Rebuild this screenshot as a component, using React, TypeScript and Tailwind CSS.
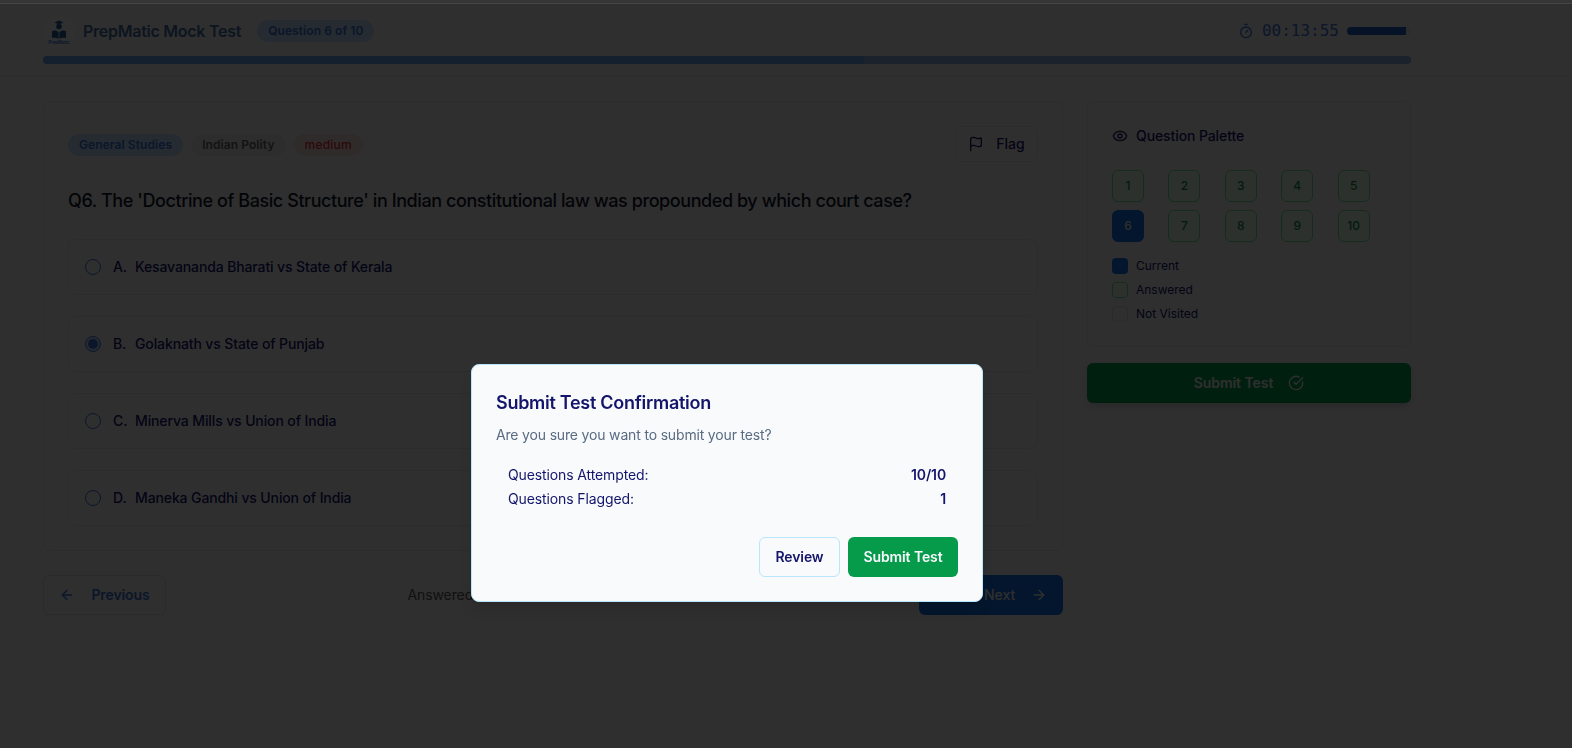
import React from 'react'
import { ArrowLeft, ArrowRight, CircleCheckBig, Eye, Flag, Timer } from 'lucide-react'

const options = [
    { key: 'A', text: 'Kesavananda Bharati vs State of Kerala' },
    { key: 'B', text: 'Golaknath vs State of Punjab' },
    { key: 'C', text: 'Minerva Mills vs Union of India' },
    { key: 'D', text: 'Maneka Gandhi vs Union of India' },
]

const Logo = () => (
    <div className="w-8 h-8 rounded-full bg-[#f0f1f3] flex items-center justify-center">
        <svg viewBox="0 0 32 32" className="w-8 h-8">
            {/* cap */}
            <path d="M11.5 7.5 L16 5.5 L20.5 7.5 L16 9.5 Z" fill="#1f5f9a" />
            {/* head */}
            <circle cx="16" cy="11.5" r="2.8" fill="#1f5f9a" />
            {/* open book */}
            <path d="M9 16 C11.5 15 14 15.5 15.6 17 V24 C14 22.8 11.5 22.4 9 23 Z" fill="#1f5f9a" />
            <path d="M23 16 C20.5 15 18 15.5 16.4 17 V24 C18 22.8 20.5 22.4 23 23 Z" fill="#1f5f9a" />
            <text x="16" y="28.5" textAnchor="middle" fontSize="4.4" fontWeight="600" fill="#2a70d0">PrepMatic</text>
        </svg>
    </div>
)

const App = () => {
    return (
        <div className="relative h-[748px] overflow-hidden bg-[#e8e8e8] font-['Inter',sans-serif]">
            {/* header */}
            <header className="h-[77px] pt-[4px] border-b border-[#dadada] bg-[#ebebeb] px-[43px]">
                <div className="w-[1368px]">
                    <div className="h-[52px] flex items-center justify-between pt-[1px]">
                        <div className="flex items-center">
                            <Logo />
                            <h1 className="ml-[8px] text-base font-semibold tracking-[-0.26px] text-[#3d6b9e]">PrepMatic Mock Test</h1>
                            <span className="ml-4 px-[11px] py-[3px] rounded-full bg-[#b8d4f0] text-xs font-semibold tracking-[0.08px] text-[#3a70d0]">Question 6 of 10</span>
                        </div>
                        <div className="flex items-center">
                            <Timer className="w-4 h-4 text-[#3a70d0]" />
                            <span className="ml-2 font-['DejaVu_Sans_Mono',monospace] text-base text-[#3a70d0]">00:13:55</span>
                            <div className="ml-2 w-16 h-2 rounded-full bg-[#dde2ea] overflow-hidden">
                                <div className="h-full w-[92%] bg-[#1e60c0]"></div>
                            </div>
                        </div>
                    </div>
                    <div className="h-2 rounded-full bg-[#8ea8d8] overflow-hidden">
                        <div className="h-full w-[60%] bg-[#64a0e0]"></div>
                    </div>
                </div>
            </header>

            <main className="w-[1368px] ml-[43px] mt-6 flex gap-6 items-start">
                {/* question side */}
                <div className="w-[1020px]">
                    <div className="border border-[#dadada] rounded-lg bg-[#ebebeb] p-6 h-[450px]">
                        <div className="flex items-start justify-between">
                            <div className="flex items-center gap-2 mt-2">
                                <span className="px-[11px] py-[3px] rounded-full bg-[#b8d4f0] text-xs font-semibold tracking-[0.08px] text-[#3a70d0]">General Studies</span>
                                <span className="px-[11px] py-[3px] rounded-full bg-[#e0e0e0] text-xs font-semibold tracking-[0.08px] text-[#606060]">Indian Polity</span>
                                <span className="px-[11px] py-[3px] rounded-full bg-[#f0d4d4] text-xs font-medium tracking-[0.2px] text-[#d83030]">medium</span>
                            </div>
                            <button className="h-9 w-[83px] flex items-center justify-center gap-3 border border-[#dadada] rounded-md text-sm font-medium text-[#14146b]">
                                <Flag className="w-4 h-4" />
                                Flag
                            </button>
                        </div>
                        <h2 className="mt-[25px] text-lg font-medium tracking-[-0.42px] text-[#0f172a]">Q6. The 'Doctrine of Basic Structure' in Indian constitutional law was propounded by which court case?</h2>
                        <div className="mt-[24px] flex flex-col gap-[21px]">
                            {options.map((o) => (
                                <div key={o.key} className="h-[56px] border border-[#dadada] rounded-lg flex items-center pl-4 text-sm font-medium tracking-[-0.12px] text-[#14146b]">
                                    <span className={`w-4 h-4 rounded-full border flex items-center justify-center ${o.key === 'B' ? 'border-[#3a70d0] bg-[#b8d4f0]' : 'border-[#3a70d0]'}`}>
                                        {o.key === 'B' && <span className="w-[10px] h-[10px] rounded-full bg-[#3a70d0]"></span>}
                                    </span>
                                    <span className="ml-3 w-[22px]">{o.key}.</span>
                                    <span>{o.text}</span>
                                </div>
                            ))}
                        </div>
                    </div>

                    {/* footer nav */}
                    <div className="mt-6 flex items-center justify-between">
                        <button className="w-[123px] h-10 flex items-center justify-center gap-4 border border-[#c8d4e4] rounded-md text-sm font-semibold tracking-[-0.1px] text-[#3a70d0]">
                            <ArrowLeft className="w-4 h-4" />
                            Previous
                        </button>
                        <div className="w-[270px] text-sm tracking-[-0.1px] text-[#555555]">Answered: 10 of 10 • Marked for later: 1</div>
                        <button className="w-[144px] h-10 flex items-center justify-center gap-4 rounded-md bg-[#1570e0] text-sm font-medium text-[#e8e8e8]">
                            Save &amp; Next
                            <ArrowRight className="w-4 h-4" />
                        </button>
                    </div>
                </div>

                {/* palette side */}
                <aside className="w-[324px]">
                    <div className="border border-[#dadada] rounded-lg bg-[#ebebeb] p-6">
                        <div className="flex items-center gap-2 text-sm font-medium tracking-[-0.1px] text-[#14146b]">
                            <Eye className="w-4 h-4" />
                            Question Palette
                        </div>
                        <div className="mt-6 grid grid-cols-5 gap-2">
                            {[1, 2, 3, 4, 5, 6, 7, 8, 9, 10].map((n) => (
                                <button
                                    key={n}
                                    className={`w-8 h-8 rounded-md border text-xs font-medium flex items-center justify-center ${n === 6 ? 'bg-[#1570e0] border-[#1570e0] text-[#e8e8e8]' : 'bg-[#dcf4e4] border-[#70d890] text-[#15803d]'}`}
                                >
                                    {n}
                                </button>
                            ))}
                        </div>
                        <div className="mt-4 flex flex-col gap-2 text-xs text-[#14146b]">
                            <div className="flex items-center gap-2">
                                <span className="w-4 h-4 rounded bg-[#1570e0]"></span>
                                Current
                            </div>
                            <div className="flex items-center gap-2">
                                <span className="w-4 h-4 rounded bg-[#dcf4e4] border border-[#70d890]"></span>
                                Answered
                            </div>
                            <div className="flex items-center gap-2">
                                <span className="w-4 h-4 rounded bg-[#ebebeb] border border-[#d0d0d0]"></span>
                                Not Visited
                            </div>
                        </div>
                    </div>
                    <button className="mt-4 w-full h-10 rounded-md bg-[#059b4b] shadow-md flex items-center justify-center gap-[15px] text-sm font-semibold tracking-[-0.05px] text-[#e8e8e8]">
                        Submit Test
                        <CircleCheckBig className="w-4 h-4" />
                    </button>
                </aside>
            </main>

            {/* dialog overlay */}
            <div className="fixed inset-0 bg-black/80"></div>
            <div className="absolute inset-x-0 top-0 h-[4px] bg-[#363636] border-b border-[#464646]"></div>
            <div className="absolute left-[471px] top-[364px] w-[512px] bg-[#f8fafc] border border-[#bae6fd] rounded-lg p-6 shadow-lg">
                <h3 className="text-lg font-semibold tracking-[-0.28px] text-[#14146b]">Submit Test Confirmation</h3>
                <p className="mt-2 text-sm tracking-[-0.17px] text-[#5a6b82]">Are you sure you want to submit your test?</p>
                <div className="mt-5 px-3 flex flex-col gap-1 text-sm tracking-[-0.12px] text-[#14146b]">
                    <div className="flex justify-between">
                        <span>Questions Attempted:</span>
                        <span className="font-semibold">10/10</span>
                    </div>
                    <div className="flex justify-between">
                        <span>Questions Flagged:</span>
                        <span className="font-semibold">1</span>
                    </div>
                </div>
                <div className="mt-7 flex justify-end gap-2">
                    <button className="h-10 w-[81px] border border-[#bae6fd] rounded-md text-sm font-semibold tracking-[-0.1px] text-[#14146b]">Review</button>
                    <button className="h-10 w-[110px] rounded-md bg-[#059b4b] text-sm font-semibold tracking-[-0.1px] text-[#f8fafc]">Submit Test</button>
                </div>
            </div>
        </div>
    )
}

export default App
